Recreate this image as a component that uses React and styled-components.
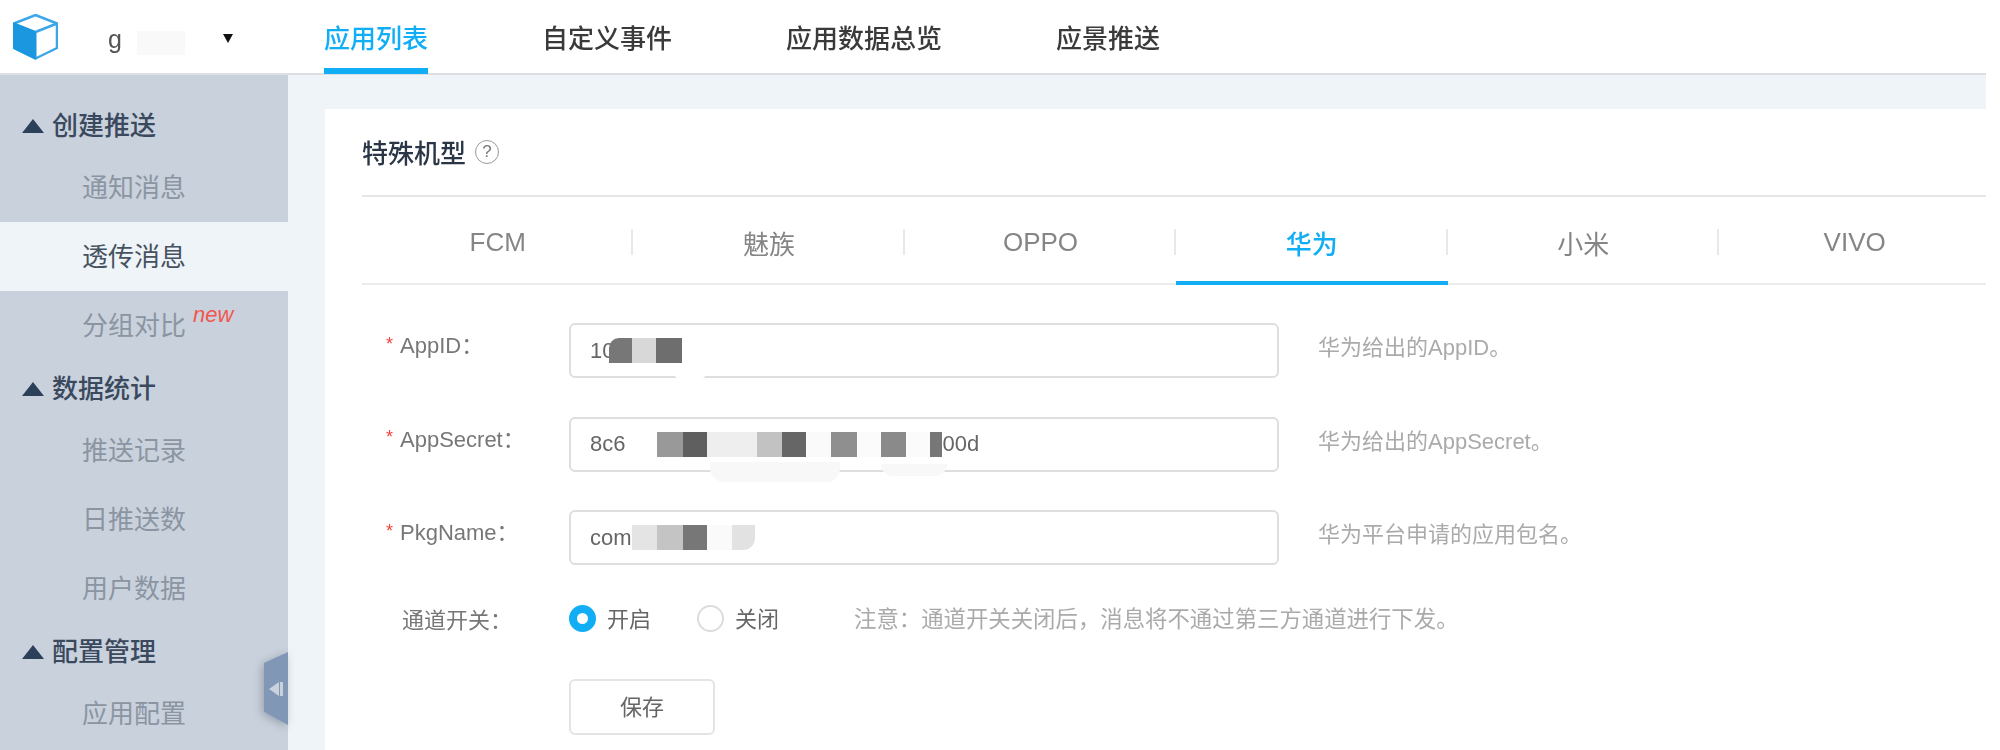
import React from "react";
import styled, { createGlobalStyle } from "styled-components";

const GlobalStyle = createGlobalStyle`
    html, body {
        margin: 0;
        padding: 0;
        background: #fff;
    }
    * {
        box-sizing: border-box;
    }
`;

const Page = styled.div`
    width: 1986px;
    height: 750px;
    overflow: hidden;
    display: flex;
    flex-direction: column;
    font-family: "Liberation Sans", "Noto Sans CJK SC", sans-serif;
    filter: blur(0.7px);
`;

const Header = styled.header`
    height: 75px;
    flex-shrink: 0;
    display: flex;
    align-items: flex-start;
    padding-left: 13px;
    background: #fff;
    border-bottom: 2px solid #dcdfe3;
`;

const Logo = styled.svg`
    width: 45px;
    height: 46px;
    margin-top: 14px;
    margin-right: 50px;
`;

const Brand = styled.div`
    display: flex;
    align-items: center;
    height: 38px;
    margin-top: 20px;
    font-size: 25px;
    color: #555;
`;

const BrandSmudge = styled.span`
    width: 48px;
    height: 24px;
    margin: 8px 0 0 15px;
    background: #f9f9f9;
`;

const Caret = styled.span`
    width: 0;
    height: 0;
    margin: 0 1px 2px 38px;
    border-left: 5.5px solid transparent;
    border-right: 5.5px solid transparent;
    border-top: 9px solid #111;
`;

const Nav = styled.nav`
    display: flex;
    gap: 114px;
    margin-left: 90px;
`;

const NavItem = styled.a`
    height: 74px;
    padding-top: 20px;
    line-height: 38px;
    font-size: 26px;
    font-weight: 500;
    color: ${(p) => (p.$active ? "#12aef5" : "#3a3a3a")};
    border-bottom: 6px solid ${(p) => (p.$active ? "#12aef5" : "transparent")};
`;

const Body = styled.div`
    flex: 1;
    display: flex;
    min-height: 0;
`;

const Sidebar = styled.aside`
    position: relative;
    width: 288px;
    flex-shrink: 0;
    padding-top: 22px;
    background: #c9d1dc;
`;

const Group = styled.div`
    height: 56px;
    display: flex;
    align-items: center;
    gap: 8px;
    padding: 0 0 3px 22px;
    font-size: 26px;
    font-weight: 500;
    color: #3a495d;
`;

const Triangle = styled.span`
    width: 0;
    height: 0;
    margin-top: 5px;
    border-left: 11.5px solid transparent;
    border-right: 11.5px solid transparent;
    border-bottom: 14px solid #2d4059;
`;

const Item = styled.div`
    height: 69px;
    display: flex;
    align-items: center;
    padding: 0 0 5px 82px;
    font-size: 26px;
    color: ${(p) => (p.$active ? "#46525f" : "#8b95a2")};
    background: ${(p) => (p.$active ? "#eff4f8" : "transparent")};
`;

const NewTag = styled.span`
    margin: 0 0 16px 7px;
    font-size: 22px;
    font-style: italic;
    color: #f1574f;
`;

const CollapseWrap = styled.div`
    position: absolute;
    top: 577px;
    right: 0;
    filter: drop-shadow(-2px 2px 4px rgba(40, 50, 70, 0.3));
`;

const Collapse = styled.div`
    width: 24px;
    height: 73px;
    display: flex;
    align-items: center;
    justify-content: center;
    gap: 1px;
    background: #8098b5;
    clip-path: polygon(0 15%, 100% 0, 100% 100%, 0 82%);
`;

const CollapseArrow = styled.span`
    width: 0;
    height: 0;
    border-top: 7px solid transparent;
    border-bottom: 7px solid transparent;
    border-right: 10px solid #c9d1dc;
`;

const CollapseBar = styled.span`
    width: 3px;
    height: 14px;
    background: #c9d1dc;
`;

const Main = styled.main`
    flex: 1;
    display: flex;
    padding: 34px 0 0 37px;
    background: #eff4f8;
`;

const Card = styled.section`
    flex: 1;
    padding-left: 37px;
    background: #fff;
`;

const TitleRow = styled.div`
    height: 88px;
    display: flex;
    align-items: center;
    gap: 9px;
    padding-bottom: 2px;
    border-bottom: 2px solid #e6e6e6;
`;

const Title = styled.h2`
    margin: 0;
    font-size: 26px;
    font-weight: 500;
    color: #2a3646;
`;

const Help = styled.span`
    width: 24px;
    height: 24px;
    margin-top: 2px;
    display: flex;
    align-items: center;
    justify-content: center;
    border: 1.5px solid #999;
    border-radius: 50%;
    font-size: 17px;
    color: #777;
`;

const Tabs = styled.div`
    height: 88px;
    display: flex;
    border-bottom: 2px solid #ececec;
`;

const Tab = styled.div`
    position: relative;
    width: 271.4px;
    padding-top: 4px;
    display: flex;
    align-items: center;
    justify-content: center;
    font-size: 26px;
    color: ${(p) => (p.$active ? "#12aef5" : "#858585")};
    font-weight: ${(p) => (p.$active ? 500 : 400)};

    &::before {
        content: "";
        display: ${(p) => (p.$active ? "block" : "none")};
        position: absolute;
        left: 0;
        right: 0;
        bottom: -2px;
        height: 4px;
        background: #12aef5;
    }

    &::after {
        content: "";
        display: ${(p) => (p.$last ? "none" : "block")};
        position: absolute;
        right: 0;
        top: 32px;
        width: 2px;
        height: 26px;
        background: #e8e8e8;
    }
`;

const Form = styled.form`
    padding-top: 38px;
`;

const Row = styled.div`
    display: flex;
    align-items: flex-start;
    margin-bottom: 38.5px;
`;

const Label = styled.div`
    width: 207px;
    height: 40px;
    display: flex;
    align-items: center;
    padding-left: 24px;
    font-size: 22px;
    color: #777;
`;

const Star = styled.span`
    width: 14px;
    margin-top: 2px;
    font-size: 18px;
    color: #f5413c;
`;

const Field = styled.div`
    position: relative;
    width: 710px;
    height: 55px;
    display: flex;
    align-items: center;
    padding-left: 19px;
    font-size: 22px;
    color: #666;
    border: 2px solid #dedede;
    border-radius: 6px;
`;

const Pixel = styled.span`
    position: relative;
    width: ${(p) => p.$w}px;
    height: 25px;
    margin-left: ${(p) => p.$shift || 0}px;
    background: ${(p) => p.$c};
    border-radius: ${(p) => p.$radius || 0};
`;

const Smudge = styled.span`
    position: absolute;
    left: ${(p) => p.$left}px;
    bottom: ${(p) => p.$bottom}px;
    width: ${(p) => p.$w}px;
    height: ${(p) => p.$h}px;
    background: ${(p) => p.$c || "#f8f8f8"};
    border-radius: 0 0 14px 14px;
`;

const Hint = styled.div`
    margin: 5px 0 0 39px;
    line-height: 40px;
    font-size: 22px;
    color: #aaa;
`;

const SwitchRow = styled.div`
    height: 29px;
    display: flex;
    align-items: center;
    margin-bottom: 46px;
`;

const SwitchLabel = styled.div`
    width: 207px;
    padding-left: 40px;
    font-size: 22px;
    color: #777;
`;

const Radio = styled.span`
    width: 27px;
    height: 27px;
    margin-right: 11px;
    border-radius: 50%;
    background: #fff;
    border: ${(p) => (p.$on ? "8px solid #12aef5" : "2px solid #dcdcdc")};
`;

const RadioText = styled.span`
    width: ${(p) => p.$w}px;
    margin-top: -2px;
    font-size: 22px;
    color: #666;
`;

const Note = styled.span`
    margin-top: -2px;
    font-size: 22.4px;
    color: #aaa;
`;

const SaveRow = styled.div`
    padding-left: 207px;
`;

const SaveButton = styled.button`
    width: 146px;
    height: 56px;
    padding: 0 0 3px;
    font-family: inherit;
    font-size: 22px;
    color: #666;
    background: #fff;
    border: 2px solid #e4e4e4;
    border-radius: 6px;
`;

const secretPixels = [
    [32, "#fff"], [26, "#999"], [24, "#5f5f5f"], [50, "#eee"], [25, "#c2c2c2"], [24, "#666"],
    [25, "#fafafa"], [26, "#8f8f8f"], [24, "#fbfbfb"], [25, "#8a8a8a"], [24, "#fbfbfb"], [12, "#777"],
];

const menu = [
    { group: "创建推送", items: ["通知消息", "透传消息", "分组对比"] },
    { group: "数据统计", items: ["推送记录", "日推送数", "用户数据"] },
    { group: "配置管理", items: ["应用配置"] },
];

const tabs = ["FCM", "魅族", "OPPO", "华为", "小米", "VIVO"];

function App() {
    return (
        <Page>
            <GlobalStyle />
            <Header>
                <Logo viewBox="0 0 45 46">
                    <path d="M22.5 1 L44 9.5 V34 L22.5 44.5 L1 34 V9.5 Z" fill="#fff" stroke="#3ba6e8" strokeWidth="2.5" strokeLinejoin="round" />
                    <path d="M1 9.5 L22.5 18 V44.5 L1 34 Z" fill="#1a97de" stroke="#1a97de" strokeWidth="2" strokeLinejoin="round" />
                    <path d="M22.5 18 L44 9.5" stroke="#3ba6e8" strokeWidth="2.5" fill="none" />
                </Logo>
                <Brand>
                    g
                    <BrandSmudge />
                    <Caret />
                </Brand>
                <Nav>
                    <NavItem $active>应用列表</NavItem>
                    <NavItem>自定义事件</NavItem>
                    <NavItem>应用数据总览</NavItem>
                    <NavItem>应景推送</NavItem>
                </Nav>
            </Header>
            <Body>
                <Sidebar>
                    {menu.map((section) => (
                        <div key={section.group}>
                            <Group>
                                <Triangle />
                                {section.group}
                            </Group>
                            {section.items.map((item) => (
                                <Item key={item} $active={item === "透传消息"}>
                                    {item}
                                    {item === "分组对比" ? <NewTag>new</NewTag> : null}
                                </Item>
                            ))}
                        </div>
                    ))}
                    <CollapseWrap>
                        <Collapse>
                            <CollapseArrow />
                            <CollapseBar />
                        </Collapse>
                    </CollapseWrap>
                </Sidebar>
                <Main>
                    <Card>
                        <TitleRow>
                            <Title>特殊机型</Title>
                            <Help>?</Help>
                        </TitleRow>
                        <Tabs>
                            {tabs.map((tab, i) => (
                                <Tab key={tab} $active={tab === "华为"} $last={i === tabs.length - 1}>
                                    {tab}
                                </Tab>
                            ))}
                        </Tabs>
                        <Form>
                            <Row>
                                <Label><Star>*</Star>AppID：</Label>
                                <Field>
                                    10
                                    <Pixel $w={23} $c="#777" $radius="10px 0 0 0" $shift={-5} />
                                    <Pixel $w={24} $c="#d8d8d8" />
                                    <Pixel $w={26} $c="#6e6e6e" />
                                    <Smudge $left={102} $bottom={-3} $w={34} $h={8} $c="#fff" />
                                </Field>
                                <Hint>华为给出的AppID。</Hint>
                            </Row>
                            <Row>
                                <Label><Star>*</Star>AppSecret：</Label>
                                <Field>
                                    <Smudge $left={139} $bottom={-12} $w={130} $h={20} />
                                    <Smudge $left={310} $bottom={-6} $w={66} $h={12} />
                                    8c6
                                    {secretPixels.map(([w, c], i) => (
                                        <Pixel key={i} $w={w} $c={c} />
                                    ))}
                                    00d
                                </Field>
                                <Hint>华为给出的AppSecret。</Hint>
                            </Row>
                            <Row>
                                <Label><Star>*</Star>PkgName：</Label>
                                <Field>
                                    com
                                    <Pixel $w={25} $c="#e4e4e4" />
                                    <Pixel $w={26} $c="#c4c4c4" />
                                    <Pixel $w={24} $c="#777" />
                                    <Pixel $w={25} $c="#fafafa" />
                                    <Pixel $w={23} $c="#e2e2e2" $radius="0 0 12px 0" />
                                </Field>
                                <Hint>华为平台申请的应用包名。</Hint>
                            </Row>
                            <SwitchRow>
                                <SwitchLabel>通道开关：</SwitchLabel>
                                <Radio $on />
                                <RadioText $w={90}>开启</RadioText>
                                <Radio />
                                <RadioText $w={119}>关闭</RadioText>
                                <Note>注意：通道开关关闭后，消息将不通过第三方通道进行下发。</Note>
                            </SwitchRow>
                            <SaveRow>
                                <SaveButton type="button">保存</SaveButton>
                            </SaveRow>
                        </Form>
                    </Card>
                </Main>
            </Body>
        </Page>
    );
}

export default App;
